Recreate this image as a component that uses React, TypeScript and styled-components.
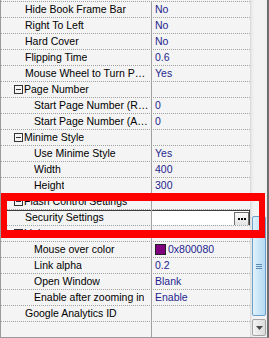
import styled, { createGlobalStyle } from "styled-components";

const GlobalStyle = createGlobalStyle`
  body {
    margin: 0;
    background: #ffffff;
  }
`;

type Row =
  | { kind: "category"; name: string; level: number }
  | { kind: "item"; name: string; value?: string; level: number; color?: string; selected?: boolean };

const rows: Row[] = [
  { kind: "item", name: "Hide Book Frame Bar", value: "No", level: 1 },
  { kind: "item", name: "Right To Left", value: "No", level: 1 },
  { kind: "item", name: "Hard Cover", value: "No", level: 1 },
  { kind: "item", name: "Flipping Time", value: "0.6", level: 1 },
  { kind: "item", name: "Mouse Wheel to Turn Page", value: "Yes", level: 1 },
  { kind: "category", name: "Page Number", level: 1 },
  { kind: "item", name: "Start Page Number (Right)", value: "0", level: 2 },
  { kind: "item", name: "Start Page Number (Actual)", value: "0", level: 2 },
  { kind: "category", name: "Minime Style", level: 1 },
  { kind: "item", name: "Use Minime Style", value: "Yes", level: 2 },
  { kind: "item", name: "Width", value: "400", level: 2 },
  { kind: "item", name: "Height", value: "300", level: 2 },
  { kind: "category", name: "Flash Control Settings", level: 1 },
  { kind: "item", name: "Security Settings", level: 1, selected: true },
  { kind: "category", name: "Link", level: 1 },
  { kind: "item", name: "Mouse over color", value: "0x800080", level: 2, color: "#800080" },
  { kind: "item", name: "Link alpha", value: "0.2", level: 2 },
  { kind: "item", name: "Open Window", value: "Blank", level: 2 },
  { kind: "item", name: "Enable after zooming in", value: "Enable", level: 2 },
  { kind: "item", name: "Google Analytics ID", value: "", level: 1 },
];

const Frame = styled.div`
  position: relative;
  width: 269px;
  height: 338px;
  box-sizing: border-box;
  display: flex;
  border-left: 1px solid #9a9a9a;
  border-right: 2px solid #6e6e6e;
  border-bottom: 1px solid #9a9a9a;
  overflow: hidden;
  font-family: "Liberation Sans", Arial, sans-serif;
  font-size: 10.5px;
`;

const Grid = styled.div`
  flex: 1;
  background: #f4f4f4;
  padding-top: 1px;
  display: flex;
  flex-direction: column;
  position: relative;
`;

const List = styled.div`
  border-top: 1px dotted #a0a0a0;
  flex: 1;
  display: flex;
  flex-direction: column;
`;

const RowBox = styled.div<{ $selected?: boolean }>`
  height: 15px;
  display: flex;
  border-bottom: 1px dotted #a0a0a0;
  ${(p) => (p.$selected ? "box-shadow: inset 0 1px 0 #3c3c3c;" : "")}
`;

const Filler = styled.div`
  flex: 1;
  display: flex;
`;

const NameCell = styled.div<{ $indent: number }>`
  width: 151px;
  flex-shrink: 0;
  box-sizing: border-box;
  padding-left: ${(p) => p.$indent}px;
  padding-right: 1px;
  border-right: 1px solid #a0a0a0;
  color: #000000;
  line-height: 15px;
  white-space: nowrap;
  overflow: hidden;
  display: flex;
  align-items: center;
`;

const NameText = styled.span`
  overflow: hidden;
  text-overflow: ellipsis;
`;

const ValueCell = styled.div<{ $selected?: boolean }>`
  flex: 1;
  padding-left: 3px;
  color: #1f1f8f;
  line-height: 15px;
  white-space: nowrap;
  overflow: hidden;
  display: flex;
  align-items: center;
  position: relative;
  ${(p) => (p.$selected ? "background: #ffffff; box-shadow: inset -1px 1px 0 #3c3c3c;" : "")}
`;

const Toggle = styled.span`
  width: 7px;
  height: 7px;
  border: 1px solid #333333;
  margin-right: 1px;
  position: relative;
  flex-shrink: 0;
  &::after {
    content: "";
    position: absolute;
    left: 1px;
    right: 1px;
    top: 3px;
    height: 1px;
    background: #333333;
  }
`;

const Swatch = styled.span<{ $color: string }>`
  width: 9px;
  height: 9px;
  border: 1px solid #222222;
  background: ${(p) => p.$color};
  margin-right: 2px;
  flex-shrink: 0;
`;

const EllipsisButton = styled.div`
  position: absolute;
  right: 1px;
  top: 2px;
  width: 15px;
  height: 14px;
  box-sizing: border-box;
  border: 1px solid #707070;
  background: linear-gradient(#fbfbfb, #e4e4e4);
  display: flex;
  align-items: center;
  justify-content: center;
  gap: 1px;
`;

const Dot = styled.span`
  width: 2px;
  height: 2px;
  background: #000000;
`;

const Scrollbar = styled.div`
  width: 17px;
  flex-shrink: 0;
  position: relative;
  background: linear-gradient(to right, #e6e6e6, #f3f3f3 3px, #f3f3f3 14px, #e9e9e9);
  border-left: 1px solid #dcdcdc;
  box-sizing: border-box;
`;

const Thumb = styled.div`
  position: absolute;
  left: 1px;
  top: 216px;
  width: 14px;
  height: 100px;
  box-sizing: border-box;
  border: 1px solid #6b9fc8;
  border-radius: 2px;
  background: linear-gradient(to right, #e3f2fc, #c8e5f9 50%, #b6daf4);
  display: flex;
  align-items: center;
  justify-content: center;
`;

const Grip = styled.div`
  width: 6px;
  height: 5px;
  background: repeating-linear-gradient(#5d89ad 0, #5d89ad 1px, transparent 1px, transparent 2px);
`;

const ArrowButton = styled.div`
  position: absolute;
  left: 1px;
  bottom: 1px;
  width: 14px;
  height: 17px;
  box-sizing: border-box;
  border: 1px solid #a4a4a4;
  border-radius: 2px;
  background: linear-gradient(to right, #f4f4f4, #dcdcdc);
  display: flex;
  align-items: center;
  justify-content: center;
`;

const Highlight = styled.div`
  position: absolute;
  left: 0;
  top: 193px;
  width: 264px;
  height: 45px;
  box-sizing: border-box;
  border: 6px solid #ff0000;
  border-top-width: 8px;
  border-bottom-width: 8px;
  pointer-events: none;
`;

export default function App() {
  return (
    <>
      <GlobalStyle />
      <Frame>
        <Grid>
          <List>
            {rows.map((row, i) => {
              if (row.kind === "category") {
                return (
                  <RowBox key={i}>
                    <NameCell $indent={13}>
                      <Toggle />
                      <NameText>{row.name}</NameText>
                    </NameCell>
                    <ValueCell />
                  </RowBox>
                );
              }
              return (
                <RowBox key={i} $selected={row.selected}>
                  <NameCell $indent={row.level === 1 ? 24 : 33}>
                    <NameText>{row.name}</NameText>
                  </NameCell>
                  <ValueCell $selected={row.selected}>
                    {row.color && <Swatch $color={row.color} />}
                    {row.value}
                    {row.selected && (
                      <EllipsisButton>
                        <Dot />
                        <Dot />
                        <Dot />
                      </EllipsisButton>
                    )}
                  </ValueCell>
                </RowBox>
              );
            })}
            <Filler>
              <NameCell $indent={24} />
            </Filler>
          </List>
        </Grid>
        <Scrollbar>
          <Thumb>
            <Grip />
          </Thumb>
          <ArrowButton>
            <svg width="7" height="4" viewBox="0 0 7 4">
              <path d="M0 0 H7 L3.5 4 Z" fill="#4a4a4a" />
            </svg>
          </ArrowButton>
        </Scrollbar>
        <Highlight />
      </Frame>
    </>
  );
}
